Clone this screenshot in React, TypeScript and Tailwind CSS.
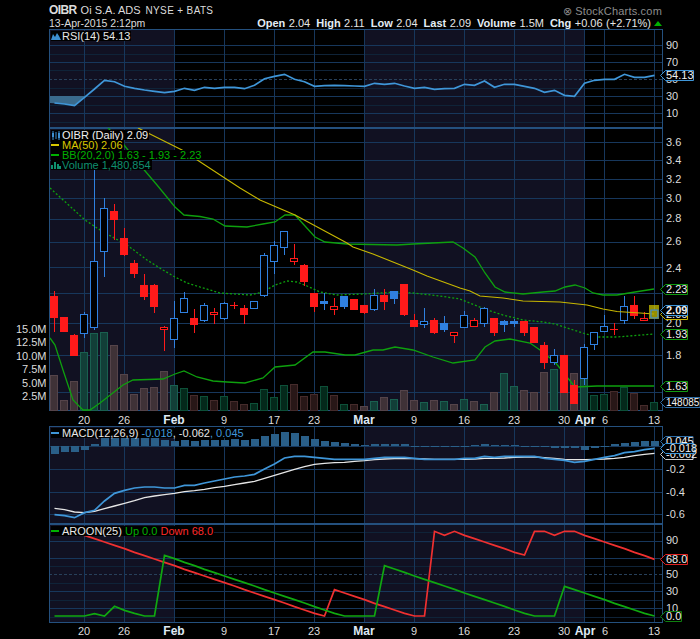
import type { ReactNode } from "react";

// x position of trading day i
const dx = (i: number) => 54.5 + 10 * i;

const GRID = "#17375c";
const GRID_DIM = "#0f2338";
const EDGE = "#24507e";
const SHADE = "#111122";

const DAY_LINES = [84.5, 124.5, 174.5, 224.5, 274.5, 314.5, 364.5, 414.5, 464.5, 514.5, 564.5, 584.5, 604.5, 654.5];
const DATES: [number, string, boolean][] = [
  [84, "20", false], [124, "26", false], [174, "Feb", true], [224, "9", false], [274, "17", false], [314, "23", false],
  [364, "Mar", true], [414, "9", false], [464, "16", false], [514, "23", false], [564, "30", false], [585, "Apr", true],
  [605, "6", false], [654, "13", false],
];

// type, wick top, wick bottom, body top, body bottom
type Candle = ["r" | "R" | "b" | "B", number, number, number, number];
const CANDLES: Candle[] = [
  ["r", 291, 332, 296, 318], ["r", 317, 332, 317, 332], ["r", 334, 356, 335, 356], ["B", 312, 338, 314, 334],
  ["B", 170, 330, 261, 328], ["B", 198, 277, 208, 252], ["r", 204, 240, 211, 220], ["r", 228, 256, 238, 255],
  ["r", 260, 278, 263, 274], ["r", 274, 300, 285, 297], ["r", 284, 313, 285, 307], ["R", 326, 351, 327, 330],
  ["B", 301, 348, 318, 340], ["B", 292, 313, 298, 313], ["r", 309, 333, 318, 325], ["B", 303, 322, 305, 321],
  ["R", 308, 324, 312, 315], ["B", 302, 320, 303, 319], ["r", 302, 309, 305, 306], ["r", 305, 324, 308, 315],
  ["B", 301, 309, 301, 309], ["B", 253, 297, 255, 296], ["B", 241, 274, 245, 262], ["B", 231, 255, 231, 248],
  ["R", 244, 265, 258, 262], ["r", 264, 286, 265, 282], ["r", 293, 312, 293, 307], ["b", 293, 310, 301, 304],
  ["R", 298, 315, 306, 310], ["b", 296, 309, 296, 307], ["r", 299, 310, 299, 310], ["r", 305, 314, 305, 313],
  ["B", 289, 311, 295, 310], ["r", 289, 310, 295, 302], ["b", 291, 304, 291, 299], ["r", 284, 316, 284, 315],
  ["r", 314, 327, 320, 327], ["B", 308, 328, 321, 325], ["r", 318, 334, 320, 333], ["b", 316, 332, 323, 330],
  ["R", 332, 343, 332, 336], ["B", 311, 328, 315, 328], ["R", 318, 327, 320, 327], ["B", 307, 327, 308, 324],
  ["r", 318, 336, 318, 333], ["b", 320, 332, 321, 325], ["b", 319, 327, 321, 324], ["r", 321, 336, 321, 333],
  ["r", 327, 343, 327, 343], ["r", 342, 369, 345, 363], ["B", 349, 365, 355, 363], ["r", 355, 393, 355, 393],
  ["r", 380, 404, 385, 404], ["B", 344, 385, 347, 379], ["B", 332, 350, 332, 345], ["B", 315, 332, 326, 332],
  ["r", 323, 335, 329, 330], ["B", 296, 324, 306, 321], ["r", 296, 319, 305, 316], ["R", 312, 321, 318, 321],
  ["B", 306, 318, 310, 318],
];

// top of each volume bar, bar colour follows the candle
const VOLUME = [
  375, 400, 381, 352, 333, 332, 345, 374, 394, 388, 387, 371, 385, 388, 395, 396, 400, 396, 401, 404, 403, 389, 397,
  385, 384, 396, 394, 386, 395, 404, 404, 406, 401, 397, 399, 390, 400, 402, 400, 401, 404, 399, 401, 404, 392, 373,
  386, 390, 392, 372, 369, 392, 373, 372, 395, 394, 391, 387, 393, 405, 402,
];

const RSI = [
  103, 104, 105.7, 97.3, 89, 80.3, 81.7, 86.3, 88.3, 90, 91.3, 92.7, 91.3, 88.3, 90.3, 87.3, 88.3, 87.3, 87.3, 88.7,
  85.3, 78.7, 76.3, 74.3, 79.3, 81.7, 86.3, 85.7, 85.3, 85.7, 86, 86.3, 83.3, 84.3, 83.3, 86, 88.3, 87.3, 89.3, 88.7,
  88.3, 84.3, 85.3, 81, 87.3, 84.3, 84.3, 86.3, 88.3, 92.3, 90.3, 95.3, 96.3, 83.3, 80.3, 79.3, 79.3, 74.3, 77.3,
  77.3, 75.3,
];

const MA50 = "138,128 182,150 240,188 260,200 295,215 347,243 353,247 373,254 413,270 427,276 460,288 470,291 480,296 503,298 523,301 560,302 587,305 603,309 617,311.5 640,313 654,314";
const BB_UP = "108,128 120,140 140,165 157,185 175,207 184,215 200,216.5 213,219 225,226 247,227 263,224 275,222 285,215 295,215 305,226 315,237 325,242 347,244 397,245 413,244 453,242 463,248 475,257 485,273 495,287 505,292 523,294 543,292 555,291 565,287 575,285 585,288 593,293 603,295 617,295 635,292 654,289";
const BB_MID = "50,188 85,220 97,228 107,234 127,245 147,260 163,270 175,277 187,283 200,287 220,293 250,295 263,292 275,285 287,281 297,282 307,286 320,292 337,295 363,294 397,292 413,293 440,296 460,299 487,310 503,315 523,320 543,322 555,324 567,328 583,333 597,337 617,337 654,334";
const BB_LOW = "50,338 55,345 63,370 73,400 83,410 90,410 100,403 123,385 133,380 163,379 175,374 184,371 197,377 213,381 227,382 245,383 263,378 275,367 295,365 313,352 325,352 345,355 355,355 373,350 383,350 395,347 413,350 433,357 453,363 475,360 485,347 495,341 510,339 530,343 540,350 555,362 575,387 597,386 654,386";

// MACD values as measured in the panel's 3x zoom rows
const HIST = [
  116, 112, 112, 104, 87, 67, 66, 66, 66, 66, 68, 75, 79, 76, 79, 76, 76, 76, 72, 76, 72, 64, 58, 51, 55, 64, 72, 79,
  82, 85, 88, 89, 88, 88, 88, 88, 92, 94, 94, 94, 94, 92, 90, 88, 90, 91, 91, 92, 92, 92, 98, 99, 100, 106, 100, 94,
  88, 84, 81, 79, 79,
];
const MACD_LINE = [
  299, 302, 308, 293, 286, 258, 235, 226, 219, 216, 216, 219, 219, 211, 211, 204, 198, 192, 186, 183, 178, 162, 147,
  129, 124, 124, 127, 130, 133, 133, 133, 133, 130, 127, 127, 127, 130, 133, 133, 133, 133, 130, 130, 124, 127, 124,
  124, 124, 124, 130, 133, 136, 142, 139, 133, 127, 122, 113, 110, 104, 100,
];
const SIGNAL = [
  280, 284, 291, 293, 289, 281, 273, 265, 257, 248, 243, 239, 235, 230, 227, 223, 218, 214, 209, 204, 199, 190, 181,
  172, 163, 155, 148, 145, 143, 142, 139, 137, 134, 132, 131, 130, 131, 132, 133, 133, 133, 133, 132, 130, 130, 129,
  127, 126, 126, 128, 130, 133, 134, 134, 133, 132, 130, 127, 122, 118, 115,
];

const AROON_UP = [
  288, 288, 288, 288, 281, 288, 259, 271, 280, 288, 288, 106, 116, 127, 137, 148, 158, 168, 178, 188, 198, 209, 219,
  229, 239, 249, 260, 270, 280, 288, 288, 288, 288, 137, 147, 157, 168, 178, 188, 198, 208, 219, 229, 239, 249, 259,
  270, 280, 288, 288, 288, 199, 209, 219, 229, 239, 250, 260, 270, 280, 288,
];
const AROON_DOWN = [
  26, 36, 40, 46, 56, 66, 76, 86, 97, 107, 117, 127, 137, 148, 158, 168, 178, 188, 198, 209, 219, 229, 239, 249, 260,
  270, 280, 288, 209, 219, 229, 239, 250, 260, 270, 280, 288, 288, 34, 46, 34, 46, 56, 66, 76, 86, 97, 105, 34, 34,
  46, 34, 34, 46, 56, 66, 76, 86, 97, 107, 118,
];

const series = (vals: number[], y: (v: number) => number = (v) => v) =>
  vals.map((v, i) => `${dx(i)},${y(v)}`).join(" ");

function Label({ x = 666, y, children, anchor = "start", bold = false }: { x?: number; y: number; children: ReactNode; anchor?: "start" | "middle" | "end"; bold?: boolean }) {
  return (
    <text x={x} y={y + 4} textAnchor={anchor} fontSize="11" fontWeight={bold ? 700 : 400} fill={bold ? "#dfe9f4" : "#dcdcdc"}>
      {children}
    </text>
  );
}

function Tag({ y, text, color, right, bold = false, size = 11 }: { y: number; text: string; color: string; right: number; bold?: boolean; size?: number }) {
  const c = Math.floor(y) + 0.5;
  return (
    <g>
      <polygon points={`660.5,${c} 665.5,${c - 5} ${right},${c - 5} ${right},${c + 5} 665.5,${c + 5}`} fill="#000" stroke={color} />
      <text x={666} y={c + 3.5} fontSize={size} fontWeight={bold ? 700 : 400} fill="#f0f0f0">{text}</text>
    </g>
  );
}

function Plot({ top, bottom, rows, dim = [], dashed }: { top: number; bottom: number; rows: number[]; dim?: number[]; dashed?: number }) {
  return (
    <g shapeRendering="crispEdges">
      <rect x={50} y={top} width={125} height={bottom - top} fill={SHADE} />
      <rect x={365} y={top} width={220} height={bottom - top} fill={SHADE} />
      {dim.map((y) => <line key={y} x1={49} x2={662} y1={y} y2={y} stroke={GRID_DIM} />)}
      {rows.map((y) => <line key={y} x1={49} x2={662} y1={y} y2={y} stroke={GRID} />)}
      {dashed !== undefined && <line x1={49} x2={662} y1={dashed} y2={dashed} stroke="#27405a" strokeDasharray="3 2" />}
      {DAY_LINES.map((x) => <line key={x} x1={x} x2={x} y1={top} y2={bottom} stroke={GRID} />)}
      <rect x={49.5} y={top + 0.5} width={613} height={bottom - top - 1} fill="none" stroke={EDGE} />
    </g>
  );
}

function DateAxis({ y }: { y: number }) {
  return (
    <g>
      {DATES.map(([x, t, month]) => (
        <text key={x} x={x} y={y} textAnchor="middle" fontSize={month ? 12 : 11} fontWeight={month ? 700 : 400} fill={month ? "#dfe9f4" : "#dcdcdc"}>
          {t}
        </text>
      ))}
    </g>
  );
}

function Panel({ top, height, legend, children }: { top: number; height: number; legend: ReactNode; children: ReactNode }) {
  return (
    <div className="relative" style={{ height }}>
      <svg width={700} height={height} viewBox={`0 ${top} 700 ${height}`} className="block">
        {children}
      </svg>
      <div className="absolute left-[51px] top-[2px] flex flex-col items-start text-[11px] leading-[10px]">{legend}</div>
    </div>
  );
}

function Key({ icon, children }: { icon: ReactNode; children: ReactNode }) {
  return (
    <div className="flex h-[10px] items-center bg-black pr-px whitespace-nowrap">
      <span className="mr-px flex h-[10px] w-[10px] items-center">{icon}</span>
      <span>{children}</span>
    </div>
  );
}

const Dash = ({ color }: { color: string }) => <span className="block h-[2px] w-[8px]" style={{ background: color }} />;

function Candles() {
  return (
    <g shapeRendering="crispEdges">
      {CANDLES.map(([t, wt, wb, bt, bb], i) => {
        const x = dx(i);
        const c = t === "r" || t === "R" ? "#ff1a1a" : "#2f80e0";
        const filled = t === "r" || t === "b";
        return (
          <g key={i}>
            <line x1={x} x2={x} y1={wt} y2={wb} stroke={c} />
            {filled ? (
              <rect x={x - 4.5} y={bt} width={8} height={Math.max(bb - bt, 1)} fill={c} />
            ) : (
              <rect x={x - 4} y={bt + 0.5} width={7} height={bb - bt - 1} fill="#000" stroke={c} />
            )}
          </g>
        );
      })}
    </g>
  );
}

function Volume() {
  return (
    <g shapeRendering="crispEdges">
      {VOLUME.map((top, i) => {
        const red = CANDLES[i][0] === "r" || CANDLES[i][0] === "R";
        const lit = i <= 12 || (i >= 31 && i <= 53);
        const fill = red ? (lit ? "#3f3237" : "#281717") : lit ? "#123f38" : "#04291b";
        const stroke = red ? (lit ? "#55444a" : "#452b2b") : lit ? "#1a6050" : "#0d5038";
        return <rect key={i} x={dx(i) - 4} y={top + 0.5} width={7} height={410 - top} fill={fill} stroke={stroke} />;
      })}
    </g>
  );
}

export default function App() {
  const z = (v: number) => 415 + v / 3;
  const a = (v: number) => 520 + v / 3;
  return (
    <div className="w-[700px] h-[639px] overflow-hidden bg-black font-['Liberation_Sans',Arial,sans-serif] text-[#dcdcdc]">
      {/* Header */}
      <div className="h-[29px] pl-[49px] pr-[38px]">
        <div className="flex h-[17px] items-end justify-between leading-[12px]">
          <div className="flex items-baseline whitespace-nowrap">
            <span className="text-[12px] font-bold tracking-[-0.6px]">OIBR</span>
            <span className="ml-[4px] text-[11px]">Oi S.A. ADS</span>
            <span className="ml-[5px] text-[10px] tracking-[0.35px]">NYSE + BATS</span>
          </div>
          <span className="text-[11px] tracking-[0.2px] text-[#8c8c8c]">⊗ StockCharts.com</span>
        </div>
        <div className="flex h-[12px] items-center justify-between whitespace-nowrap text-[11px] leading-[12px]">
          <span className="text-[10.5px]">13-Apr-2015 2:12pm</span>
          <div className="flex items-center gap-[6px] text-[#e6e6e6] [word-spacing:0.4px]">
            <span><b className="text-[#e4edf5]">Open</b> 2.04</span>
            <span><b className="text-[#e4edf5]">High</b> 2.11</span>
            <span><b className="text-[#e4edf5]">Low</b> 2.04</span>
            <span><b className="text-[#e4edf5]">Last</b> 2.09</span>
            <span><b className="text-[#e4edf5]">Volume</b> 1.5M</span>
            <span className="flex items-center">
              <span><b className="text-[#e4edf5]">Chg</b> +0.06 (+2.71%)</span>
              <span className="ml-[3px] h-0 w-0 border-x-[4px] border-b-[5px] border-x-transparent border-b-[#00b000]" />
            </span>
          </div>
        </div>
      </div>

      {/* RSI */}
      <Panel
        top={29}
        height={99}
        legend={
          <Key icon={<svg width="10" height="8" viewBox="0 0 10 8"><path d="M0 8 2 2 4 5 6 1 8 4 10 8Z" fill="#3d8fd0" /></svg>}>
            <span className="text-[#e8e8e8]">RSI(14) 54.13</span>
          </Key>
        }
      >
        <Plot top={29} bottom={128} rows={[45, 62, 96, 113]} dim={[54, 70, 88, 105, 122]} dashed={79} />
        <polygon points="50,96 85,96 74.5,105.7 64.5,104 50,103" fill="#3a6a8c" />
        <polyline points={series(RSI)} fill="none" stroke="#3f96d8" strokeWidth="1.7" />
        <Label y={45}>90</Label>
        <Label y={62}>70</Label>
        <Label y={79}>50</Label>
        <Label y={96}>30</Label>
        <Label y={113}>10</Label>
        <Tag y={75} text="54.13" color="#3f96d8" right={693.5} />
      </Panel>

      {/* Price + volume */}
      <Panel
        top={128}
        height={298}
        legend={
          <>
            <Key icon={<svg width="10" height="9" viewBox="0 0 10 9"><path d="M2 0v9M5 1v7M8 0v9" stroke="#3d8fd0" /><path d="M1 2h2v4H1zM7 2h2v5H7z" fill="#3d8fd0" /></svg>}>
              <span className="text-[#f0f0f0]">OIBR (Daily) 2.09</span>
            </Key>
            <Key icon={<Dash color="#d8c800" />}><span className="text-[#d8c800]">MA(50) 2.06</span></Key>
            <Key icon={<Dash color="#00b000" />}><span className="text-[#00b000]">BB(20,2.0) 1.63 - 1.93 - 2.23</span></Key>
            <Key icon={<svg width="10" height="8" viewBox="0 0 10 8"><path d="M0 4h2v4H0zM3 1h2v7H3zM6 3h2v5H6zM8 5h2v3H8z" fill="#0f8f6f" /></svg>}>
              <span className="text-[#0f8f6f]">Volume 1,480,854</span>
            </Key>
          </>
        }
      >
        <Plot top={128} bottom={411} rows={[142, 160, 179, 198, 219, 242, 267, 293, 323, 355, 392]} />
        <Volume />
        <polyline points={BB_UP} fill="none" stroke="#0ea00e" strokeWidth="1.3" />
        <polyline points={BB_LOW} fill="none" stroke="#0ea00e" strokeWidth="1.3" />
        <polyline points={BB_MID} fill="none" stroke="#0ea00e" strokeWidth="1.3" strokeDasharray="2 2" />
        <Candles />
        <polyline points={MA50} fill="none" stroke="#c8b800" strokeWidth="1.1" />
        <rect x={649} y={305} width={10} height={14} fill="#b0a800" opacity="0.85" />
        <rect x={651} y={310} width={7} height={8} fill="none" stroke="#2f80e0" />
        {[
          ["3.6", 142], ["3.4", 160], ["3.2", 179], ["3.0", 198], ["2.8", 218], ["2.6", 241], ["2.4", 268], ["2.0", 323], ["1.8", 355],
        ].map(([t, y]) => <Label key={t} y={y as number}>{t}</Label>)}
        {[["15.0M", 329], ["12.5M", 342], ["10.0M", 356], ["7.5M", 369], ["5.0M", 383], ["2.5M", 396]].map(([t, y]) => (
          <Label key={t} x={46.5} anchor="end" y={y as number}>{t}</Label>
        ))}
        <Tag y={289} text="2.23" color="#109a10" right={687.5} />
        <Tag y={314} text="2.06" color="#c8b800" right={687.5} />
        <Tag y={310} text="2.09" color="#3f96d8" right={687.5} bold />
        <Tag y={334} text="1.93" color="#109a10" right={687.5} />
        <Tag y={386} text="1.63" color="#109a10" right={687.5} />
        <Tag y={402} text="148085" color="#2f6fa8" right={700} size={10} />
        <DateAxis y={424} />
      </Panel>

      {/* MACD */}
      <Panel
        top={426}
        height={98}
        legend={
          <Key icon={<Dash color="#3f96d8" />}>
            <span className="text-[#e8e8e8]">MACD(12,26,9)</span> <span className="text-[#3f96d8]">-0.018</span>
            <span className="text-[#e8e8e8]">, -0.062</span>
            <span className="text-[#3f96d8]">, 0.045</span>
          </Key>
        }
      >
        <Plot top={426} bottom={524} rows={[446, 469, 492, 514]} />
        <g shapeRendering="crispEdges">
          {HIST.map((v, i) => {
            const y = z(v);
            return <rect key={i} x={dx(i) - 4} y={Math.min(y, 446)} width={8} height={Math.max(Math.abs(y - 446), 1)} fill="#2a5f88" />;
          })}
        </g>
        <polyline points={series(SIGNAL, z)} fill="none" stroke="#e6e6e6" strokeWidth="1.3" />
        <polyline points={series(MACD_LINE, z)} fill="none" stroke="#3f96d8" strokeWidth="1.7" />
        <Label y={469}>-0.2</Label>
        <Label y={492}>-0.4</Label>
        <Label y={514}>-0.6</Label>
        <Tag y={441} text="0.045" color="#2f6fa8" right={693} />
        <Tag y={454} text="-0.062" color="#cccccc" right={693} />
        <Tag y={448} text="-0.018" color="#3f96d8" right={694} />
      </Panel>

      {/* Aroon */}
      <Panel
        top={524}
        height={115}
        legend={
          <Key icon={<Dash color="#00b000" />}>
            <span className="text-[#e8e8e8]">AROON(25)</span> <span className="text-[#00b000]">Up 0.0</span>{" "}
            <span className="text-[#ff2a2a]">Down 68.0</span>
          </Key>
        }
      >
        <Plot top={524} bottom={623} rows={[541, 558, 591, 608]} dim={[532, 566, 583, 600, 617]} dashed={574} />
        <polyline points={series(AROON_DOWN, a)} fill="none" stroke="#f03030" strokeWidth="1.7" />
        <polyline points={series(AROON_UP, a)} fill="none" stroke="#10a810" strokeWidth="1.7" />
        <Label y={540}>90</Label>
        <Label y={574}>50</Label>
        <Label y={591}>30</Label>
        <Label y={608}>10</Label>
        <Tag y={559} text="68.0" color="#e02020" right={687.5} />
        <Tag y={616} text="0.0" color="#0f7f0f" right={681.5} />
        <DateAxis y={635} />
      </Panel>
    </div>
  );
}
